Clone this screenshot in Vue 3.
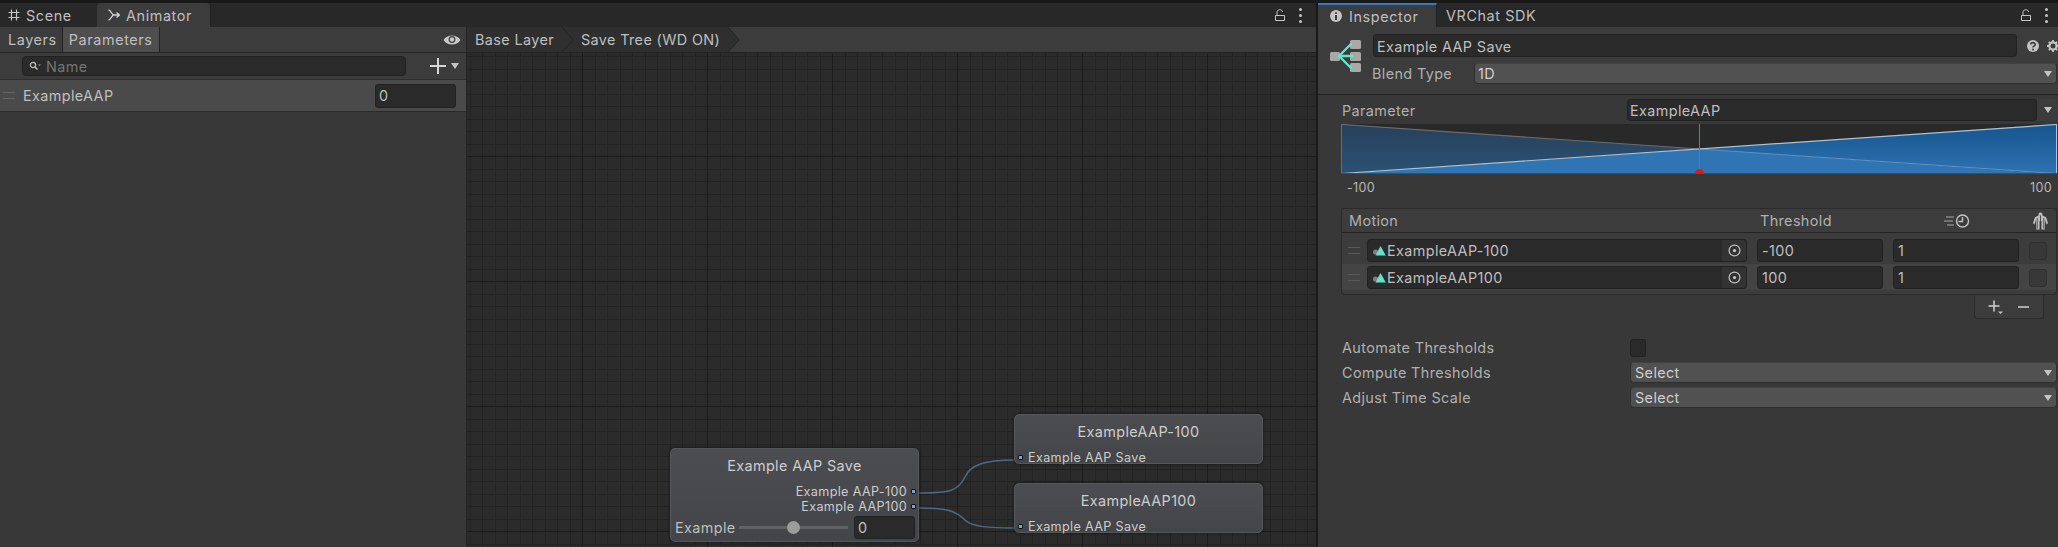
<script setup>
const motions = [
  { name: 'ExampleAAP-100', threshold: '-100', speed: '1' },
  { name: 'ExampleAAP100', threshold: '100', speed: '1' }
]
const extras = ['Compute Thresholds', 'Adjust Time Scale']
</script>

<template>
  <div class="app">
    <section class="animator">
      <div class="tabbar">
        <div class="tab">
          <svg class="tab-icon" viewBox="0 0 12 12"><path d="M3.5 0.5V11.5M8.5 0.5V11.5M0.5 3.5H11.5M0.5 8.5H11.5" stroke="#c4c4c4" stroke-width="1.2" fill="none" /></svg>
          <span>Scene</span>
        </div>
        <div class="tab tab-active">
          <svg class="tab-icon" viewBox="0 0 12 12"><path d="M0.5 1C3 1 3.5 6 6 6H11.5M0.5 11C3 11 3.5 6 6 6M8.5 3.5L11.5 6L8.5 8.5" stroke="#d0d0d0" stroke-width="1.4" fill="none" /></svg>
          <span>Animator</span>
        </div>
        <div class="tab-tools tools-animator">
          <svg class="lock" viewBox="0 0 10 12"><path d="M0.5 6.5H9.5V11.5H0.5ZM2 6.5V3C2 0 7.5 0 7.5 3" stroke="#c4c4c4" stroke-width="1" fill="none" /></svg>
          <div class="dots"><i></i><i></i><i></i></div>
        </div>
      </div>

      <div class="animator-body">
        <aside class="params">
          <div class="toolbar params-bar">
            <button class="seg">Layers</button>
            <button class="seg seg-on">Parameters</button>
            <svg class="eye" viewBox="0 0 18 12"><path d="M0.5 6C4 0 14 0 17.5 6C14 12 4 12 0.5 6Z" fill="#c8c8c8" /><circle cx="9" cy="5.5" r="3.4" fill="#3c3c3c" /><circle cx="9" cy="5.5" r="2.2" fill="#c8c8c8" /></svg>
          </div>
          <div class="search-row">
            <div class="search">
              <svg class="search-icon" viewBox="0 0 12 10"><circle cx="4" cy="4" r="2.6" stroke="#bdbdbd" stroke-width="1.3" fill="none" /><path d="M6 6L8.5 8.5" stroke="#bdbdbd" stroke-width="1.6" /><path d="M9 3.5H12L10.5 5Z" fill="#9a9a9a" /></svg>
              <span>Name</span>
            </div>
            <svg class="plus" viewBox="0 0 16 16"><path d="M8 0V16M0 8H16" stroke="#d6d6d6" stroke-width="2" /></svg>
            <span class="caret"></span>
          </div>
          <div class="param-row">
            <span class="grip"></span>
            <span class="param-name">ExampleAAP</span>
            <div class="field param-value">0</div>
          </div>
        </aside>

        <main class="graph">
          <div class="toolbar crumbs">
            <div class="crumb">
              <span>Base Layer</span>
              <svg viewBox="0 0 12 25"><path d="M0 0L11 13L0 25Z" fill="#2f2f2f" /><path d="M0 0L11 13L0 25" stroke="#232323" fill="none" /></svg>
            </div>
            <div class="crumb">
              <span>Save Tree (WD ON)</span>
              <svg viewBox="0 0 12 25"><path d="M0 0L11 13L0 25Z" fill="#2f2f2f" /><path d="M0 0L11 13L0 25" stroke="#232323" fill="none" /></svg>
            </div>
          </div>
          <div class="canvas">
            <svg class="edges" width="849" height="494" viewBox="467 53 849 494">
              <path d="M919 493C950 493 958 491 965 477C970 465 985 460 1014 460" stroke="#4d6a84" stroke-width="1.5" fill="none" />
              <path d="M919 508C945 508 955 510 965 520C972 527 990 528 1014 528" stroke="#4d6a84" stroke-width="1.5" fill="none" />
            </svg>

            <div class="node node-tree">
              <div class="node-title">Example AAP Save</div>
              <div class="port-out">Example AAP-100<i class="port"></i></div>
              <div class="port-out">Example AAP100<i class="port"></i></div>
              <div class="node-slider">
                <span class="node-param">Example</span>
                <div class="track"><i class="thumb"></i></div>
                <div class="field node-value">0</div>
              </div>
            </div>

            <div class="node node-child node-child-a">
              <div class="node-title">ExampleAAP-100</div>
              <div class="port-in"><i class="port"></i>Example AAP Save</div>
            </div>
            <div class="node node-child node-child-b">
              <div class="node-title">ExampleAAP100</div>
              <div class="port-in"><i class="port"></i>Example AAP Save</div>
            </div>
          </div>
        </main>
      </div>
    </section>

    <section class="inspector">
      <div class="tabbar">
        <div class="tab tab-inspector">
          <svg class="tab-icon" viewBox="0 0 12 12"><circle cx="6" cy="6" r="6" fill="#c4c4c4" /><path d="M6 2.2V3.8M6 5V10" stroke="#3c3c3c" stroke-width="2" /></svg>
          <span>Inspector</span>
        </div>
        <div class="tab tab-sdk"><span>VRChat SDK</span></div>
        <div class="tab-tools tools-inspector">
          <svg class="lock" viewBox="0 0 10 12"><path d="M0.5 6.5H9.5V11.5H0.5ZM2 6.5V3C2 0 7.5 0 7.5 3" stroke="#c4c4c4" stroke-width="1" fill="none" /></svg>
          <div class="dots"><i></i><i></i><i></i></div>
        </div>
      </div>

      <header class="head">
        <svg class="tree-icon" viewBox="0 0 32 32">
          <rect x="0" y="12" width="10" height="9" rx="1.5" fill="#a8a8a8" />
          <rect x="20" y="0" width="11" height="9" rx="1.5" fill="#a8a8a8" />
          <rect x="20" y="12" width="11" height="9" rx="1.5" fill="#a8a8a8" />
          <rect x="20" y="23" width="11" height="9" rx="1.5" fill="#a8a8a8" />
          <path d="M21 4L9 16L21 28M9 16H22" stroke="#63e3ca" stroke-width="2.4" fill="none" stroke-linecap="round" stroke-linejoin="round" />
        </svg>
        <div class="head-fields">
          <div class="head-name">
            <div class="field name-field">Example AAP Save</div>
            <svg class="help" viewBox="0 0 12 12"><circle cx="6" cy="6" r="6" fill="#c4c4c4" /><path d="M3.8 4.6C3.8 2 8.2 2 8.2 4.4C8.2 6 6 5.8 6 7.6" stroke="#3c3c3c" stroke-width="1.6" fill="none" /><circle cx="6" cy="9.6" r="1" fill="#3c3c3c" /></svg>
            <svg class="gear" viewBox="0 0 12 12"><circle cx="6" cy="6" r="3.6" stroke="#c4c4c4" stroke-width="2.2" fill="none" /><path d="M6 0V12M0 6H12M1.8 1.8L10.2 10.2M10.2 1.8L1.8 10.2" stroke="#c4c4c4" stroke-width="1.8" stroke-dasharray="2.4 7.2" /></svg>
          </div>
          <div class="head-blend">
            <label>Blend Type</label>
            <div class="select blend-select">1D<span class="caret"></span></div>
          </div>
        </div>
      </header>

      <div class="content">
        <div class="param-line">
          <label>Parameter</label>
          <div class="field param-field">ExampleAAP</div>
          <div class="param-drop"><span class="caret"></span></div>
        </div>

        <div class="blend-graph">
          <svg width="716" height="50" viewBox="0 0 716 50" preserveAspectRatio="none">
            <defs>
              <linearGradient id="dimBlue" x1="0" y1="0" x2="0" y2="1">
                <stop offset="0" stop-color="#27405a" />
                <stop offset="1" stop-color="#2c5274" />
              </linearGradient>
              <linearGradient id="deepBlue" x1="0" y1="0" x2="0" y2="1">
                <stop offset="0" stop-color="#15558f" />
                <stop offset="1" stop-color="#2f73b1" />
              </linearGradient>
            </defs>
            <rect width="716" height="50" fill="#292929" />
            <polygon points="0,0 358,25 0,50" fill="url(#dimBlue)" />
            <polygon points="716,0 716,50 358,25" fill="url(#deepBlue)" />
            <polygon points="0,50 358,25 716,50" fill="#3075b3" />
            <path d="M358 25L715.5 49.5" stroke="#5f93c4" stroke-width="1" />
            <path d="M0.5 0.5L358 25" stroke="#6c6c6c" stroke-width="1.2" />
            <path d="M0.5 49.5L715.5 0.5" stroke="#a9c2d6" stroke-width="1.2" />
            <path d="M0.5 0V50" stroke="#6d6d6d" />
            <path d="M715.5 0V50" stroke="#a8c2d8" />
            <path d="M0 49.5H716" stroke="#4a4a4a" />
          </svg>
          <span class="marker"></span>
          <svg class="marker-foot" viewBox="0 0 10 6"><path d="M0 6V3L3 0H7L10 3V6Z" fill="#ee1111" /></svg>
        </div>

        <div class="range">
          <span>-100</span>
          <span>100</span>
        </div>

        <div class="motion-table">
          <div class="motion-head">
            <span class="col-motion">Motion</span>
            <span class="col-threshold">Threshold</span>
            <svg class="clock" viewBox="0 0 26 14">
              <path d="M2 3H10M0 7H9M3 11H10" stroke="#a8a8a8" stroke-width="1.2" />
              <circle cx="18.5" cy="7" r="6" stroke="#c4c4c4" stroke-width="1.4" fill="none" />
              <path d="M18.5 3V7.5H14.5" stroke="#c4c4c4" stroke-width="1.4" fill="none" />
            </svg>
            <svg class="avatar" viewBox="0 0 16 18">
              <path d="M8 0C10 0 10.5 2 10 3L14 5L16 11L14.5 13L13 8L12.5 18H9V9H7V18H3.500L3 8L1.500 13L0 11L2 5L6 3C5.500 2 6 0 8 0Z" fill="#bdbdbd" />
              <path d="M8 3V18M4.500 6V17M11.500 6V17" stroke="#3c3c3c" stroke-width="0.9" />
            </svg>
          </div>
          <div class="motion-list">
            <div v-for="m in motions" :key="m.name" class="motion-row">
              <span class="grip row-grip"></span>
              <div class="field motion-field">
                <svg class="clip-icon" viewBox="0 0 13 10"><circle cx="2.600" cy="6" r="2.600" fill="#808080" /><path d="M7.500 0L12.800 9.500H2.500Z" fill="#63e3ca" /></svg>
                <span>{{ m.name }}</span>
                <div class="target"><svg viewBox="0 0 12 12"><circle cx="6" cy="6" r="5" stroke="#c4c4c4" stroke-width="1.100" fill="none" /><circle cx="6" cy="6" r="1.500" fill="#c4c4c4" /></svg></div>
              </div>
              <div class="field cell-field">{{ m.threshold }}</div>
              <div class="field cell-field">{{ m.speed }}</div>
              <i class="check"></i>
            </div>
          </div>
          <div class="motion-foot">
            <svg class="foot-plus" viewBox="0 0 15 14"><path d="M6 0.500V11.500M0.500 6H11.500" stroke="#d0d0d0" stroke-width="1.500" /><path d="M10 11.500H15L12.500 14Z" fill="#c4c4c4" /></svg>
            <svg class="foot-minus" viewBox="0 0 11 2"><path d="M0 1H11" stroke="#d0d0d0" stroke-width="1.500" /></svg>
          </div>
        </div>

        <div class="form-line auto-line">
          <label>Automate Thresholds</label>
          <i class="check auto-check"></i>
        </div>
        <div v-for="label in extras" :key="label" class="form-line">
          <label>{{ label }}</label>
          <div class="select form-select">Select<span class="caret"></span></div>
        </div>
      </div>
    </section>
  </div>
</template>

<style>
html, body {
  margin: 0;
  background: #191919;
  overflow: hidden;
}
</style>

<style scoped>
.app {
  width: 2058px;
  height: 547px;
  box-sizing: border-box;
  padding-top: 3px;
  display: flex;
  gap: 2px;
  overflow: hidden;
  background: #191919;
  color: #bfbfbf;
  font-family: Inter, "Liberation Sans", sans-serif;
  font-size: 14.4px;
  letter-spacing: 0.38px;
}

button {
  font: inherit;
  letter-spacing: inherit;
  color: inherit;
}

.animator {
  width: 1316px;
  flex: none;
  display: flex;
  flex-direction: column;
}

.inspector {
  flex: 1;
  min-width: 0;
  display: flex;
  flex-direction: column;
  background: #383838;
}

/* tabs */
.tabbar {
  height: 24px;
  flex: none;
  display: flex;
  align-items: stretch;
  background: #282828;
}

.tab {
  display: flex;
  align-items: center;
  gap: 6px;
  padding-left: 8px;
  width: 97px;
  box-sizing: border-box;
  letter-spacing: 0.6px;
}

.tab-active {
  width: 114px;
  padding-left: 11px;
  background: #3c3c3c;
  border-radius: 4px 4px 0 0;
  border-right: 1px solid #222;
}

.tab-inspector {
  width: 119px;
  padding-left: 12px;
  gap: 7px;
  background: #3c3c3c;
  border-top: 2px solid #3a79bb;
  border-right: 1px solid #222;
}

.tab-sdk {
  padding-left: 9px;
  width: auto;
}

.tab-icon {
  width: 12px;
  height: 12px;
  flex: none;
}

.tab-tools {
  margin-left: auto;
  display: flex;
  align-items: center;
  gap: 14px;
}

.tools-animator {
  padding-right: 14px;
}

.tools-inspector {
  padding-right: 10px;
}

.lock {
  width: 10px;
  height: 12px;
}

.dots {
  display: flex;
  flex-direction: column;
  gap: 3px;
}

.dots i {
  width: 3px;
  height: 3px;
  border-radius: 50%;
  background: #c4c4c4;
}

.animator-body {
  flex: 1;
  min-height: 0;
  display: flex;
}

.toolbar {
  height: 25px;
  flex: none;
  display: flex;
  align-items: stretch;
  background: #3c3c3c;
  border-bottom: 1px solid #232323;
}

/* parameters column */
.params {
  width: 466px;
  flex: none;
  background: #383838;
  border-right: 1px solid #232323;
  display: flex;
  flex-direction: column;
}

.params-bar {
  padding-left: 3px;
}

.seg {
  margin: 0;
  padding: 0 5px;
  border: 0;
  border-right: 1px solid #232323;
  background: #3c3c3c;
  letter-spacing: 0.6px;
}

.seg-on {
  background: #4e4e4e;
  padding: 0 6px;
}

.eye {
  width: 18px;
  height: 12px;
  margin: auto 5px auto auto;
}

.search-row {
  height: 26px;
  display: flex;
  align-items: center;
  background: #3c3c3c;
  padding-left: 22px;
}

.search {
  width: 384px;
  height: 20px;
  box-sizing: border-box;
  display: flex;
  align-items: center;
  gap: 5px;
  padding-left: 6px;
  background: #2a2a2a;
  border: 1px solid #212121;
  border-radius: 4px;
  color: #757575;
}

.search-icon {
  width: 12px;
  height: 10px;
}

.plus {
  width: 16px;
  height: 16px;
  margin-left: 24px;
}

.search-row .caret {
  position: static;
  margin: 0 0 0 5px;
}

.param-row {
  height: 31px;
  display: flex;
  align-items: center;
  background: #4a4a4a;
  border-top: 1px solid #2e2e2e;
  border-bottom: 1px solid #2a2a2a;
}

.grip {
  display: block;
  width: 12px;
  height: 5px;
  flex: none;
  margin-left: 3px;
  border-top: 1px solid #646464;
  border-bottom: 1px solid #646464;
}

.param-name {
  margin-left: 8px;
}

.field {
  box-sizing: border-box;
  display: flex;
  align-items: center;
  background: #2a2a2a;
  border: 1px solid #212121;
  border-radius: 3px;
  padding-left: 3px;
}

.param-value {
  width: 81px;
  height: 24px;
  margin-left: auto;
  margin-right: 10px;
}

/* graph */
.graph {
  flex: 1;
  min-width: 0;
  display: flex;
  flex-direction: column;
  background: #2a2a2a;
}

.crumb {
  display: flex;
  align-items: center;
  padding-left: 8px;
  background: #2f2f2f;
  position: relative;
}

.crumb span {
  padding-right: 8px;
}

.crumb svg {
  position: absolute;
  left: 100%;
  top: 0;
  width: 12px;
  height: 25px;
  z-index: 1;
}

.crumb + .crumb {
  padding-left: 19px;
}

.canvas {
  flex: 1;
  position: relative;
  overflow: hidden;
  background-color: #2b2b2b;
  background-image:
    linear-gradient(90deg, #1b1b1b 1px, transparent 1px),
    linear-gradient(#1b1b1b 1px, transparent 1px),
    linear-gradient(90deg, #232323 1px, transparent 1px, transparent 12px, #232323 12px, #232323 13px, transparent 13px),
    linear-gradient(#232323 1px, transparent 1px, transparent 12px, #232323 12px, #232323 13px, transparent 13px);
  background-size: 125px 125px, 125px 125px, 25px 25px, 25px 25px;
  background-position: 115px 0, 0 103px, 3px 0, 0 16px;
}

.edges {
  position: absolute;
  left: 0;
  top: 0;
}

.node {
  position: absolute;
  box-sizing: border-box;
  width: 249px;
  background: linear-gradient(#4b4d50, #434548);
  border: 1px solid #55585b;
  border-radius: 5px;
  box-shadow: 0 0 3px #111;
  color: #cdcdcd;
}

.node-tree {
  left: 203px;
  top: 395px;
  height: 94px;
}

.node-child {
  left: 547px;
  height: 50px;
}

.node-child-a {
  top: 361px;
}

.node-child-b {
  top: 430px;
}

.node-title {
  text-align: center;
  height: 35px;
  line-height: 34px;
}

.port-out,
.port-in {
  font-size: 12.6px;
  letter-spacing: 0.35px;
  line-height: 15px;
  display: flex;
  align-items: center;
}

.port-out {
  justify-content: flex-end;
  padding-right: 2px;
}

.port-out .port {
  margin-left: 4px;
}

.port-in .port {
  margin: 0 5px 0 3px;
}

.port {
  width: 3px;
  height: 3px;
  background: #7fa5c8;
  border: 1px solid #111;
  border-radius: 1px;
  flex: none;
}

.node-slider {
  display: flex;
  align-items: center;
  padding: 2px 3px 0 4px;
  color: #bfbfbf;
}

.node-param {
  width: 64px;
  flex: none;
}

.track {
  width: 109px;
  height: 3px;
  background: #5f6163;
  position: relative;
  flex: none;
}

.thumb {
  position: absolute;
  left: 48px;
  top: -5px;
  width: 13px;
  height: 13px;
  border-radius: 50%;
  background: #9c9c9c;
}

.node-value {
  width: 62px;
  height: 23px;
  margin-left: 6px;
}

/* inspector */
.head {
  height: 68px;
  flex: none;
  box-sizing: border-box;
  display: flex;
  background: #3c3c3c;
  border-bottom: 1px solid #232323;
  padding: 7px 0 0 12px;
}

.tree-icon {
  width: 32px;
  height: 32px;
  margin-top: 6px;
  flex: none;
}

.head-fields {
  flex: 1;
  min-width: 0;
  margin-left: 11px;
}

.head-name {
  display: flex;
  align-items: center;
  height: 23px;
}

.name-field {
  width: 644px;
  height: 23px;
  padding-top: 1px;
  flex: none;
}

.help {
  width: 12px;
  height: 12px;
  margin-left: 10px;
  flex: none;
}

.gear {
  width: 12px;
  height: 12px;
  margin-left: 8px;
  flex: none;
}

.head-blend {
  display: flex;
  align-items: center;
  margin-top: 6px;
}

.head-blend label {
  width: 102px;
  margin-left: -1px;
  flex: none;
  color: #b0b0b0;
}

.select {
  box-sizing: border-box;
  display: flex;
  align-items: center;
  background: #515151;
  border: 1px solid #2f2f2f;
  border-top-color: #424242;
  border-radius: 4px;
  padding-left: 3px;
  position: relative;
  color: #cfcfcf;
}

.blend-select {
  width: 583px;
  height: 21px;
}

.caret {
  position: absolute;
  right: 4px;
  top: 50%;
  margin-top: -3px;
  width: 0;
  height: 0;
  border-style: solid;
  border-width: 6px 4.5px 0;
  border-color: #c4c4c4 transparent transparent;
}

.content {
  flex: 1;
  min-height: 0;
  padding: 4px 1px 0 23px;
}

.param-line {
  height: 22px;
  display: flex;
  align-items: center;
}

.param-line label {
  width: 286px;
  padding-left: 1px;
  box-sizing: border-box;
  flex: none;
  color: #b0b0b0;
}

.param-field {
  width: 410px;
  height: 22px;
  flex: none;
  padding-left: 2px;
}

.param-drop {
  flex: 1;
  height: 22px;
  position: relative;
  background: #3c3c3c;
  border-radius: 0 3px 3px 0;
}

.param-drop .caret {
  right: 5px;
}

.blend-graph {
  position: relative;
  width: 716px;
  height: 50px;
  margin-top: 3px;
}

.blend-graph > svg:first-child {
  display: block;
}

.marker {
  position: absolute;
  left: 358px;
  top: 0;
  width: 1px;
  height: 47px;
  background: #e5484a;
}

.marker-foot {
  position: absolute;
  left: 354px;
  top: 45px;
  width: 9px;
  height: 5px;
}

.range {
  display: flex;
  justify-content: space-between;
  padding: 6px 5px 0 6px;
  height: 34px;
  box-sizing: border-box;
  font-size: 12.6px;
  letter-spacing: 0.3px;
  line-height: 16px;
  color: #b8b8b8;
}

.motion-table {
  position: relative;
  width: 716px;
  height: 87px;
}

.motion-head {
  height: 25px;
  box-sizing: border-box;
  display: flex;
  align-items: center;
  background: #3c3c3c;
  border: 1px solid #2b2b2b;
  border-bottom-color: #232323;
  border-radius: 3px 3px 0 0;
  color: #b0b0b0;
}

.col-motion {
  width: 418px;
  padding-left: 7px;
  box-sizing: border-box;
  flex: none;
}

.col-threshold {
  width: 184px;
  flex: none;
}

.clock {
  width: 26px;
  height: 14px;
  flex: none;
}

.avatar {
  width: 15px;
  height: 18px;
  margin-left: 63px;
  flex: none;
}

.motion-list {
  height: 62px;
  box-sizing: border-box;
  padding-top: 6px;
  background: #3c3c3c;
  border: 1px solid #2b2b2b;
  border-top: 0;
  border-radius: 0 0 4px 4px;
}

.motion-row {
  height: 23px;
  margin-bottom: 4px;
  display: flex;
  align-items: center;
  position: relative;
}

.motion-row:nth-child(2) {
  background-color: #444;
  box-shadow: 0 -2px 0 #444, 0 1px 0 #444;
}

.row-grip {
  margin-left: 6px;
  border-color: #5a5a5a;
}

.motion-field {
  width: 380px;
  height: 23px;
  margin-left: 7px;
  padding-left: 5px;
  position: relative;
  flex: none;
}

.clip-icon {
  width: 13px;
  height: 10px;
  margin-right: 1px;
  flex: none;
}

.target {
  position: absolute;
  right: 0;
  top: 0;
  bottom: 0;
  width: 24px;
  display: flex;
  align-items: center;
  justify-content: center;
  background: #333;
  border-radius: 0 3px 3px 0;
}

.target svg {
  width: 13px;
  height: 13px;
}

.cell-field {
  width: 126px;
  height: 23px;
  margin-left: 10px;
  padding-left: 4px;
  flex: none;
}

.check {
  display: block;
  width: 18px;
  height: 18px;
  margin-left: 10px;
  box-sizing: border-box;
  background: #383838;
  border: 1px solid #303030;
  border-radius: 3px;
  flex: none;
}

.motion-foot {
  position: absolute;
  right: 13px;
  top: 87px;
  width: 70px;
  height: 24px;
  box-sizing: border-box;
  display: flex;
  align-items: center;
  padding-left: 13px;
  background: #3c3c3c;
  border: 1px solid #2b2b2b;
  border-top: 0;
  border-radius: 0 0 4px 4px;
}

.foot-plus {
  width: 15px;
  height: 14px;
}

.foot-minus {
  width: 11px;
  height: 2px;
  margin-left: 15px;
}

.form-line {
  height: 25px;
  display: flex;
  align-items: center;
}

.form-line label {
  width: 289px;
  padding-left: 1px;
  box-sizing: border-box;
  flex: none;
  color: #b0b0b0;
}

.auto-line {
  margin-top: 40px;
}

.auto-check {
  margin-left: 0;
  width: 16px;
  height: 18px;
  background: #2a2a2a;
  border-color: #212121;
}

.form-select {
  width: 427px;
  height: 21px;
  padding-left: 4px;
}
</style>
